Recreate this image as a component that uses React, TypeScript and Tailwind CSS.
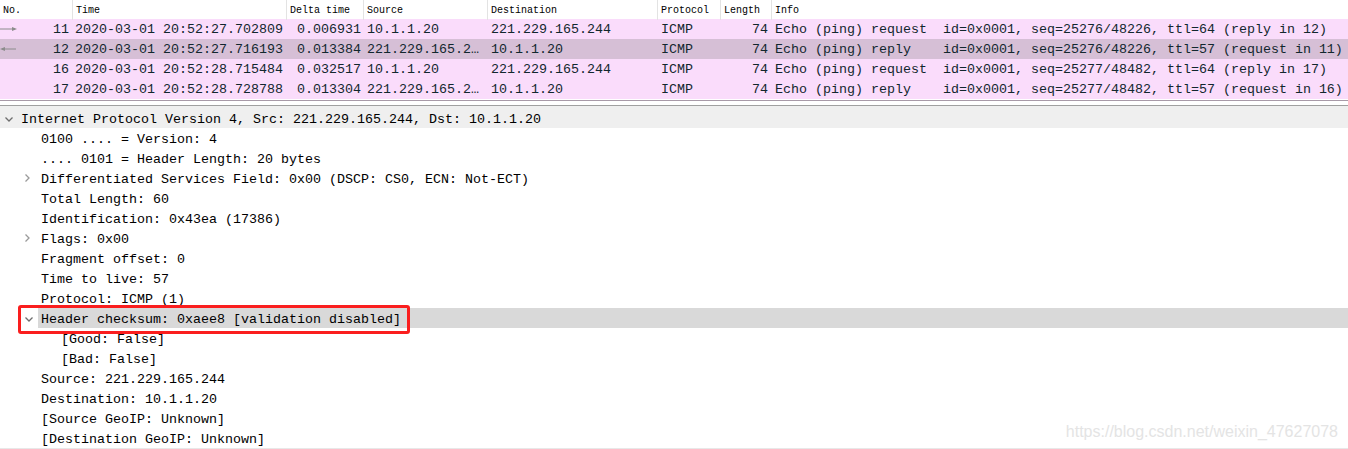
import React from 'react'

const mono = { fontFamily: '"Liberation Mono", "DejaVu Sans Mono", monospace' }

interface Pkt { no: number; time: string; delta: string; src: string; dst: string; len: number; info: string; arrow?: 'out' | 'in'; selected?: boolean }

const packets: Pkt[] = [
  { no: 11, time: '2020-03-01 20:52:27.702809', delta: '0.006931', src: '10.1.1.20', dst: '221.229.165.244', len: 74, info: 'Echo (ping) request  id=0x0001, seq=25276/48226, ttl=64 (reply in 12)', arrow: 'out' },
  { no: 12, time: '2020-03-01 20:52:27.716193', delta: '0.013384', src: '221.229.165.2…', dst: '10.1.1.20', len: 74, info: 'Echo (ping) reply    id=0x0001, seq=25276/48226, ttl=57 (request in 11)', arrow: 'in', selected: true },
  { no: 16, time: '2020-03-01 20:52:28.715484', delta: '0.032517', src: '10.1.1.20', dst: '221.229.165.244', len: 74, info: 'Echo (ping) request  id=0x0001, seq=25277/48482, ttl=64 (reply in 17)' },
  { no: 17, time: '2020-03-01 20:52:28.728788', delta: '0.013304', src: '221.229.165.2…', dst: '10.1.1.20', len: 74, info: 'Echo (ping) reply    id=0x0001, seq=25277/48482, ttl=57 (request in 16)' },
]

const cols = 'grid grid-cols-[72px_214px_77px_124px_170px_63px_51px_1fr]'

function Arrow({ dir }: { dir: 'out' | 'in' }) {
  return (
    <svg width="18" height="6" viewBox="0 0 18 6" className="absolute left-0 top-[6px]">
      {dir === 'out' ? (
        <>
          <line x1="0" y1="3" x2="15" y2="3" stroke="#8c8c8c" strokeWidth="1" />
          <path d="M12 1 L17 3 L12 5 Z" fill="#8c8c8c" />
        </>
      ) : (
        <>
          <line x1="2" y1="3" x2="16" y2="3" stroke="#8c8c8c" strokeWidth="1" />
          <path d="M5 1 L0 3 L5 5 Z" fill="#8c8c8c" />
        </>
      )}
    </svg>
  )
}

function Down() {
  return (
    <svg width="8" height="5" viewBox="0 0 8 5" className="shrink-0">
      <path d="M0.5 0.5 L4 4 L7.5 0.5" fill="none" stroke="#6e6e6e" strokeWidth="1.3" />
    </svg>
  )
}

function Right() {
  return (
    <svg width="5" height="8" viewBox="0 0 5 8" className="shrink-0">
      <path d="M0.5 0.5 L4 4 L0.5 7.5" fill="none" stroke="#9a9a9a" strokeWidth="1.3" />
    </svg>
  )
}

interface Node { text: string; depth: number; exp?: 'open' | 'closed' }

const tree: Node[] = [
  { text: '0100 .... = Version: 4', depth: 1 },
  { text: '.... 0101 = Header Length: 20 bytes', depth: 1 },
  { text: 'Differentiated Services Field: 0x00 (DSCP: CS0, ECN: Not-ECT)', depth: 1, exp: 'closed' },
  { text: 'Total Length: 60', depth: 1 },
  { text: 'Identification: 0x43ea (17386)', depth: 1 },
  { text: 'Flags: 0x00', depth: 1, exp: 'closed' },
  { text: 'Fragment offset: 0', depth: 1 },
  { text: 'Time to live: 57', depth: 1 },
  { text: 'Protocol: ICMP (1)', depth: 1 },
]

const tail: Node[] = [
  { text: '[Good: False]', depth: 2 },
  { text: '[Bad: False]', depth: 2 },
  { text: 'Source: 221.229.165.244', depth: 1 },
  { text: 'Destination: 10.1.1.20', depth: 1 },
  { text: '[Source GeoIP: Unknown]', depth: 1 },
  { text: '[Destination GeoIP: Unknown]', depth: 1 },
]

function TreeRow({ n }: { n: Node }) {
  const pl = n.depth === 1 ? 'pl-[41px]' : 'pl-[61px]'
  return (
    <div className={`relative h-5 pt-[2px] leading-5 ${pl} whitespace-pre`}>
      {n.exp && (
        <span className="absolute left-[25px] top-[6px] flex">
          {n.exp === 'closed' ? <Right /> : <Down />}
        </span>
      )}
      {n.text}
    </div>
  )
}

export default function App() {
  return (
    <div className="w-[1348px] h-[449px] bg-white overflow-hidden relative" style={mono}>
      {/* packet list */}
      <div className={`${cols} h-[19px] text-[10px] leading-[19px] text-black`}>
        {['No.', 'Time', 'Delta time', 'Source', 'Destination', 'Protocol', 'Length', 'Info'].map((h, i) => (
          <div key={h} className={`pl-[3px] pt-px ${i > 0 ? 'border-l border-[#e3e3e3]' : ''}`}>{h}</div>
        ))}
      </div>
      {packets.map(p => (
        <div key={p.no} className={`${cols} h-5 pt-px leading-5 text-[13.33px] text-[#12272e] whitespace-pre ${p.selected ? 'bg-[#d6bfd6]' : 'bg-[#fadcfb]'}`}>
          <div className="relative text-right pr-[3px]">
            {p.arrow && <Arrow dir={p.arrow} />}
            {p.no}
          </div>
          <div className="pl-[3px]">{p.time}</div>
          <div className="text-right pr-[2px]">{p.delta}</div>
          <div className="pl-[4px] overflow-hidden">{p.src}</div>
          <div className="pl-[4px]">{p.dst}</div>
          <div className="pl-[4px]">ICMP</div>
          <div className="text-right pr-[3px]">{p.len}</div>
          <div className="pl-[4px] overflow-hidden">{p.info}</div>
        </div>
      ))}
      <div className="h-[2px] border-b border-[#a89aa8]" />
      <div className="h-[5px] border-b border-[#a0a0a0]" />

      {/* packet details */}
      <div className="text-[13.33px] text-black">
        <div className="relative h-[22px] pt-[4px] leading-5 bg-[#efefef] pl-[21px] whitespace-pre">
          <span className="absolute left-[5px] top-[11px] flex"><Down /></span>
          Internet Protocol Version 4, Src: 221.229.165.244, Dst: 10.1.1.20
        </div>
        {tree.map(n => <TreeRow key={n.text} n={n} />)}
        <div className="relative h-5 whitespace-pre">
          <span className="absolute left-[25px] top-[9px] flex"><Down /></span>
          <div className="ml-[38px] h-5 pt-[2px] leading-5 pl-[3px] bg-[#d9d9d9]">Header checksum: 0xaee8 [validation disabled]</div>
          <div className="absolute left-[18px] top-[-3px] w-[392px] h-[29px] border-[3px] border-[#fa1e1e] rounded-[3px]" />
        </div>
        {tail.map(n => <TreeRow key={n.text} n={n} />)}
        <div className="h-px bg-[#e8e8e8]" />
      </div>

      <div className="absolute right-[10px] top-[420px] text-[16px] text-[#e4e4e4]" style={{ fontFamily: '"Liberation Sans", Arial, sans-serif' }}>
        https://blog.csdn.net/weixin_47627078
      </div>
    </div>
  )
}
